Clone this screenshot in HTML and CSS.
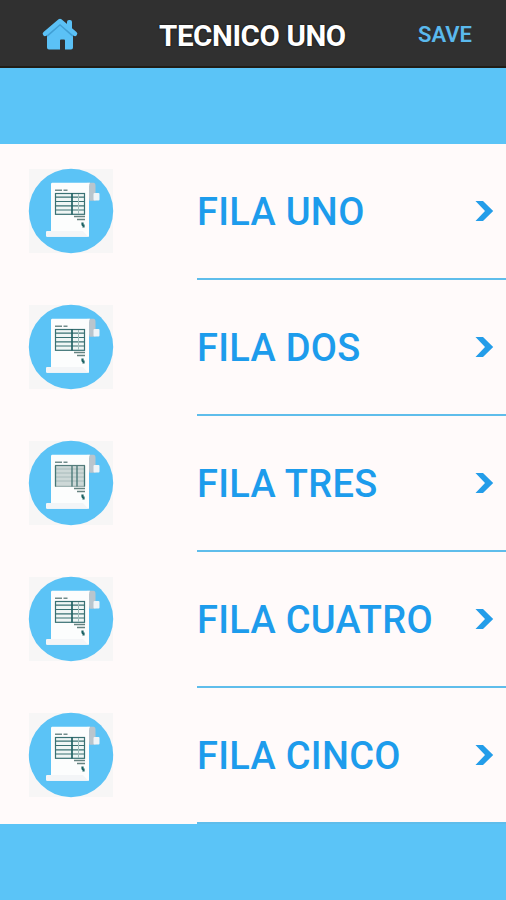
FILE: index.html
```
<!DOCTYPE html>
<html lang="es">
<head>
<meta charset="utf-8">
<title>Tecnico Uno</title>
<link rel="stylesheet" href="styles.css">
</head>
<body>
<svg class="defs" width="0" height="0" aria-hidden="true">
  <symbol id="sheet" viewBox="0 0 86 86">
    <rect x="1" y="1" width="84" height="84" fill="#f7f6f6"/>
    <circle cx="43" cy="43" r="42.2" fill="#5bc3f6"/>
    <path d="M59 14.800h6.500q2 0 2 3v15h-6z" fill="#b9c5cd"/>
    <rect x="65.500" y="25" width="6" height="7.500" rx="1" fill="#eef4f8"/>
    <path d="M24 14.800h38q-1 1-1 4v50H19q-1 0-1-2v-3h5V16q0-1 1-1.200z" fill="#fcfdfd"/>
    <path d="M19 63h36l5 5.800H19q-1 0-1-2v-3z" fill="#f3f5f7"/>
    <path d="M27 22.200h7m1.500 0h4" stroke="#718c8b" stroke-width="1.500"/>
  </symbol>
  <symbol id="grid" viewBox="0 0 86 86">
    <rect x="27.500" y="25.500" width="29" height="20.800" fill="#f0f6f5" stroke="#397173" stroke-width="1.200"/>
    <path d="M27 29.200h30M27 33.500h30M27 37.800h30M27 42h30" stroke="#397173" stroke-width="1.200"/>
    <path d="M44 25v21.500" stroke="#236365" stroke-width="1.700"/>
    <path d="M50.500 26v20" stroke="#a0bdbc" stroke-width="1"/>
  </symbol>
  <symbol id="columns" viewBox="0 0 86 86">
    <rect x="27.500" y="25.500" width="29" height="20.800" fill="#cdd8d7" stroke="#8aa3a2" stroke-width="1"/>
    <path d="M27 29h30M27 33h30M27 37h30M27 41h30" stroke="#a0b5b4" stroke-width=".8"/>
    <path d="M27.500 25.500v21M44 25.500v21M49 25.500v21M56.500 25.500v21" stroke="#467675" stroke-width="1.300"/>
    <path d="M27 25.500h30" stroke="#547d7c" stroke-width="1.200"/>
  </symbol>
  <symbol id="total" viewBox="0 0 86 86">
    <path d="M46 48.500h11M49 51.500h8" stroke="#668381" stroke-width="1.300"/>
    <path d="M54.500 54.500v2q0 1 1 1v2" fill="none" stroke="#1c6263" stroke-width="2.200"/>
  </symbol>
  <symbol id="chevron" viewBox="0 0 20 22">
    <path d="M1.500 1h7.500l10.200 10L9 21H1.500L11 11z" fill="#249de9"/>
  </symbol>
</svg>
<header class="bar">
  <svg class="home" viewBox="0 0 38 34">
    <path d="M6 18 19 7l13 11v12.500q0 2-2 2h-6v-9q0-1-1-1h-3q-1 0-1 1v9H8q-2 0-2-2z" fill="#5bc1f6"/>
    <path d="M26 5q0-2 2-2h1q2 0 2 2v9l-5-5z" fill="#5bc1f6"/>
    <path d="M5 18 19 5.500 33 18" fill="none" stroke="#419fd4" stroke-width="5" stroke-linejoin="round"/>
    <path d="M4 16.800 19 4l15 12.800" fill="none" stroke="#5bc1f6" stroke-width="4.500" stroke-linecap="round" stroke-linejoin="round"/>
  </svg>
  <h1 class="title">TECNICO UNO</h1>
  <span class="save">SAVE</span>
</header>
<main class="list">
  <div class="row"><svg class="icon"><use href="#sheet"/><use href="#grid"/><use href="#total"/></svg><div class="cell"><span class="label">FILA UNO</span><svg class="arrow"><use href="#chevron"/></svg></div></div>
  <div class="row"><svg class="icon"><use href="#sheet"/><use href="#grid"/><use href="#total"/></svg><div class="cell"><span class="label">FILA DOS</span><svg class="arrow"><use href="#chevron"/></svg></div></div>
  <div class="row"><svg class="icon"><use href="#sheet"/><use href="#columns"/><use href="#total"/></svg><div class="cell"><span class="label">FILA TRES</span><svg class="arrow"><use href="#chevron"/></svg></div></div>
  <div class="row"><svg class="icon"><use href="#sheet"/><use href="#grid"/><use href="#total"/></svg><div class="cell"><span class="label">FILA CUATRO</span><svg class="arrow"><use href="#chevron"/></svg></div></div>
  <div class="row"><svg class="icon"><use href="#sheet"/><use href="#grid"/><use href="#total"/></svg><div class="cell"><span class="label">FILA CINCO</span><svg class="arrow"><use href="#chevron"/></svg></div></div>
</main>
</body>
</html>
```
FILE: styles.css
```
* { box-sizing: border-box; }
body {
  margin: 0;
  height: 900px;
  overflow: hidden;
  background: #5bc4f7;
  font-family: Roboto, "Liberation Sans", sans-serif;
}
.defs { display: block; }
.bar {
  display: grid;
  grid-template-columns: 159px 259px 1fr;
  align-items: center;
  height: 68px;
  background: #303030;
  border-bottom: 2px solid #211d16;
}
.home { width: 38px; height: 34px; margin: 2px 0 0 41px; }
.title {
  margin: 5px 0 0;
  font-size: 29.5px;
  font-weight: 700;
  line-height: 36px;
  letter-spacing: -0.4px;
  color: #fff;
  text-shadow: 0 0 2px #000;
  white-space: nowrap;
}
.save {
  margin-top: 4px;
  font-size: 22px;
  font-weight: 600;
  line-height: 26px;
  color: #5ab9ed;
}
.list {
  margin-top: 76px;
  background: #fffafa;
}
.row {
  display: grid;
  grid-template-columns: 197px 1fr;
  height: 136px;
}
.icon { width: 86px; height: 86px; margin: 23.500px 0 0 27.500px; }
.cell {
  display: flex;
  align-items: center;
  justify-content: space-between;
  height: 136px;
  padding: 0 12px 0 0;
  border-bottom: 2px solid #5fbdeb;
}
.label {
  margin-top: 2px;
  font-size: 38px;
  font-weight: 500;
  line-height: 44px;
  letter-spacing: 0.3px;
  color: #1d9cec;
  white-space: nowrap;
}
.arrow { width: 20px; height: 22px; }
```
